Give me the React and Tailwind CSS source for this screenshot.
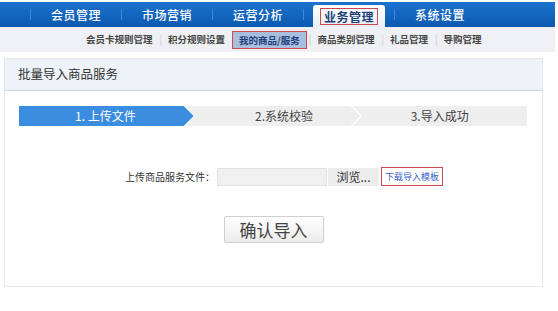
import React from 'react';

const font = { fontFamily: '"Noto Sans CJK SC", "Noto Sans", sans-serif' };

const topItems = ['会员管理', '市场营销', '运营分析', '业务管理', '系统设置'];
const subItems = ['会员卡规则管理', '积分规则设置', '我的商品/服务', '商品类别管理', '礼品管理', '导购管理'];

const TopNav = () => (
    <div className="mt-[2px] mr-[3px] h-[25px] flex items-stretch pl-[30px] bg-gradient-to-b from-[#1c73cf] to-[#0b59b0]">
        {topItems.map((t, i) => (
            <React.Fragment key={t}>
                <span className="w-px h-[11px] self-center bg-[#3f88d6]" />
                {i === 3 ? (
                    <div className="w-[90px] flex items-end justify-center">
                        <div className="w-[72px] h-[22px] rounded-t-[3px] bg-gradient-to-b from-[#ffffff] to-[#e9eef4] flex items-center justify-center">
                            <span className="border border-[#d0474c] px-[3px] h-[17px] leading-[15px] text-[12px] font-bold text-[#1d3f7a] tracking-[0.5px]">{t}</span>
                        </div>
                    </div>
                ) : (
                    <div className="w-[90px] flex items-center justify-center text-[12px] font-medium text-white tracking-[0.5px]">{t}</div>
                )}
            </React.Fragment>
        ))}
    </div>
);

const SubNav = () => (
    <div className="mr-[3px] h-[25px] bg-[#eef0f3] flex items-center pl-[86px] text-[9.5px] font-bold text-[#444]">
        {subItems.map((t, i) => (
            <React.Fragment key={t}>
                {i === 2 && <span className="w-[7px]" />}
                {i > 0 && i !== 2 && <span className={`${i === 3 ? 'ml-[2px]' : 'ml-[7px]'} mr-[6px] text-[#c8ccd2] font-normal`}>|</span>}
                {i === 2 ? (
                    <span className="h-[18px] leading-[16px] px-[6px] border border-[#d0474c] bg-[#a9bedd] text-[#1d3f7a]">{t}</span>
                ) : (
                    <span>{t}</span>
                )}
            </React.Fragment>
        ))}
    </div>
);

const Steps = () => (
    <div className="mt-[15px] ml-[14px] mr-[15px] h-[20px] flex text-[12px]">
        <div className="flex-1 flex items-center justify-center bg-[#3b8de0] text-white [clip-path:polygon(0_0,calc(100%_-_10px)_0,100%_50%,calc(100%_-_10px)_100%,0_100%)]">
            <span className="-ml-[2px]">1. 上传文件</span>
        </div>
        <div className="flex-1 -ml-[8px] flex items-center justify-center bg-[#eeeeee] text-[#444] [clip-path:polygon(0_0,calc(100%_-_10px)_0,100%_50%,calc(100%_-_10px)_100%,0_100%,10px_50%)]">
            <span className="ml-[22px]">2.系统校验</span>
        </div>
        <div className="flex-1 -ml-[8px] flex items-center justify-center bg-[#eeeeee] text-[#444] [clip-path:polygon(0_0,100%_0,100%_100%,0_100%,10px_50%)]">
            <span>3.导入成功</span>
        </div>
    </div>
);

export default function App() {
    return (
        <div className="w-[558px] h-[311px] bg-white overflow-hidden" style={font}>
            <TopNav />
            <SubNav />
            <div className="mt-[6px] ml-[4px] w-[539px] h-[229px] border border-[#e4e7eb] flex flex-col">
                <div className="h-[32px] bg-[#eef3f9] border-b border-[#c8d5e5] flex items-center pl-[13px] text-[12.5px] text-[#333]">
                    批量导入商品服务
                </div>
                <Steps />
                <div className="mt-[41px] flex items-center justify-center pl-[21px]">
                    <span className="text-[10px] text-[#333] mr-[2px]">上传商品服务文件：</span>
                    <div className="w-[110px] h-[18px] bg-[#f0f0f0] border border-[#e0e0e0]" />
                    <div className="w-[51px] h-[18px] bg-[#ececec] flex items-center justify-center text-[12px] text-[#333] ml-px">浏览...</div>
                    <div className="ml-[2px] h-[19px] px-[3px] border border-[#d0474c] flex items-center text-[9px] text-[#3a5fcd]">下载导入模板</div>
                </div>
                <div className="mt-[30px] flex justify-center">
                    <button className="w-[100px] h-[27px] rounded-[2px] border border-[#cfcfcf] bg-gradient-to-b from-[#ffffff] to-[#ececec] text-[17px] text-[#444] leading-none">
                        确认导入
                    </button>
                </div>
            </div>
        </div>
    );
}
